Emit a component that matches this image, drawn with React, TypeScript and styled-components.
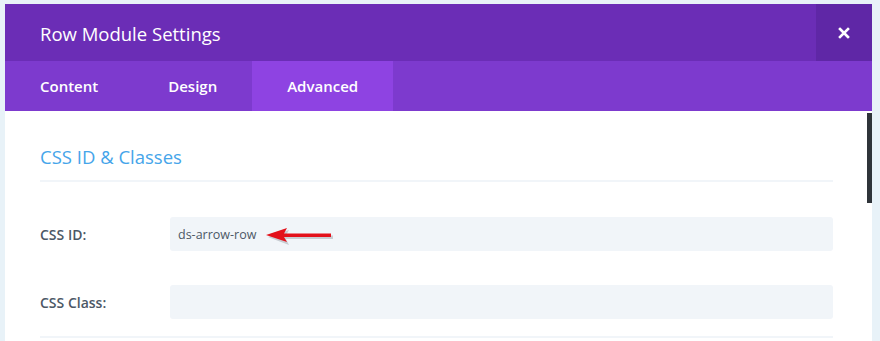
import React from "react";
import styled, { createGlobalStyle } from "styled-components";

const GlobalStyle = createGlobalStyle`
	html, body {
		margin: 0;
		padding: 0;
		background: #e8f2f8;
		font-family: "Open Sans", "Liberation Sans", sans-serif;
		overflow: hidden;
	}
`;

const Modal = styled.div`
	margin: 4px 0 0 5px;
	width: 867px;
	height: 337px;
	background: #fff;
	display: flex;
	flex-direction: column;
	overflow: hidden;
`;

const Header = styled.div`
	display: flex;
	align-items: stretch;
	height: 57px;
	background: #6b2db6;
`;

const Title = styled.h1`
	flex: 1;
	margin: 0;
	padding: 2px 0 0 35px;
	display: flex;
	align-items: center;
	font-size: 18.5px;
	font-weight: 400;
	color: #fff;
`;

const CloseButton = styled.button`
	width: 56px;
	border: 0;
	padding: 0;
	background: #5f27a6;
	color: #fff;
	display: flex;
	align-items: center;
	justify-content: center;
	cursor: pointer;
`;

const Tabs = styled.div`
	display: flex;
	height: 50px;
	background: #7d3ace;
`;

const Tab = styled.div<{ active?: boolean }>`
	display: flex;
	align-items: center;
	padding: 0 35px;
	font-size: 15px;
	font-weight: 600;
	color: #fff;
	background: ${props => (props.active ? "#8e43e2" : "transparent")};
`;

const Body = styled.div`
	position: relative;
	flex: 1;
	padding: 0 39px 0 35px;
`;

const Scrollbar = styled.div`
	position: absolute;
	right: 0;
	top: 2px;
	width: 5px;
	height: 90px;
	background: #2f3439;
`;

const SectionTitle = styled.h2`
	margin: 0;
	padding: 33px 0 10px;
	font-size: 18.5px;
	font-weight: 400;
	line-height: 26px;
	color: #45a5ea;
	border-bottom: 2px solid #f1f5f9;
`;

const Fields = styled.div`
	display: flex;
	flex-direction: column;
	gap: 34px;
	padding: 35px 0 17px;
	border-bottom: 2px solid #f1f5f9;
`;

const Row = styled.div`
	display: flex;
	align-items: center;
`;

const Label = styled.label`
	width: 130px;
	flex-shrink: 0;
	font-size: 14px;
	font-weight: 600;
	color: #4c5866;
`;

const InputBox = styled.div`
	position: relative;
	flex: 1;
	height: 34px;
	border-radius: 3px;
	background: #f1f5f9;
	display: flex;
	align-items: center;
	padding-left: 8px;
	font-size: 12.5px;
	color: #4c5866;
`;

const Pointer = styled.svg`
	margin-left: 9px;
	margin-top: 4px;
`;

function CloseIcon() {
	return (
		<svg width="12" height="12" viewBox="0 0 12 12">
			<path d="M2 2 L10 10 M10 2 L2 10" stroke="#fff" strokeWidth="2.6" strokeLinecap="square" />
		</svg>
	);
}

function RedArrow() {
	return (
		<Pointer width="70" height="17" viewBox="0 0 70 17">
			<g fill="#7a8089" opacity="0.35">
				<polygon points="3,9 24,2 21,7.5 68,7.5 68,11 21,11 24,17" />
			</g>
			<g fill="#e3101a">
				<polygon points="1,7 22,0 19,5.5 66,5.5 66,9 19,9 22,14" />
			</g>
		</Pointer>
	);
}

export default function App() {
	return (
		<>
			<GlobalStyle />
			<Modal>
				<Header>
					<Title>Row Module Settings</Title>
					<CloseButton aria-label="Close">
						<CloseIcon />
					</CloseButton>
				</Header>
				<Tabs>
					<Tab>Content</Tab>
					<Tab>Design</Tab>
					<Tab active>Advanced</Tab>
				</Tabs>
				<Body>
					<Scrollbar />
					<SectionTitle>CSS ID &amp; Classes</SectionTitle>
					<Fields>
						<Row>
							<Label>CSS ID:</Label>
							<InputBox>
								ds-arrow-row
								<RedArrow />
							</InputBox>
						</Row>
						<Row>
							<Label>CSS Class:</Label>
							<InputBox />
						</Row>
					</Fields>
				</Body>
			</Modal>
		</>
	);
}
